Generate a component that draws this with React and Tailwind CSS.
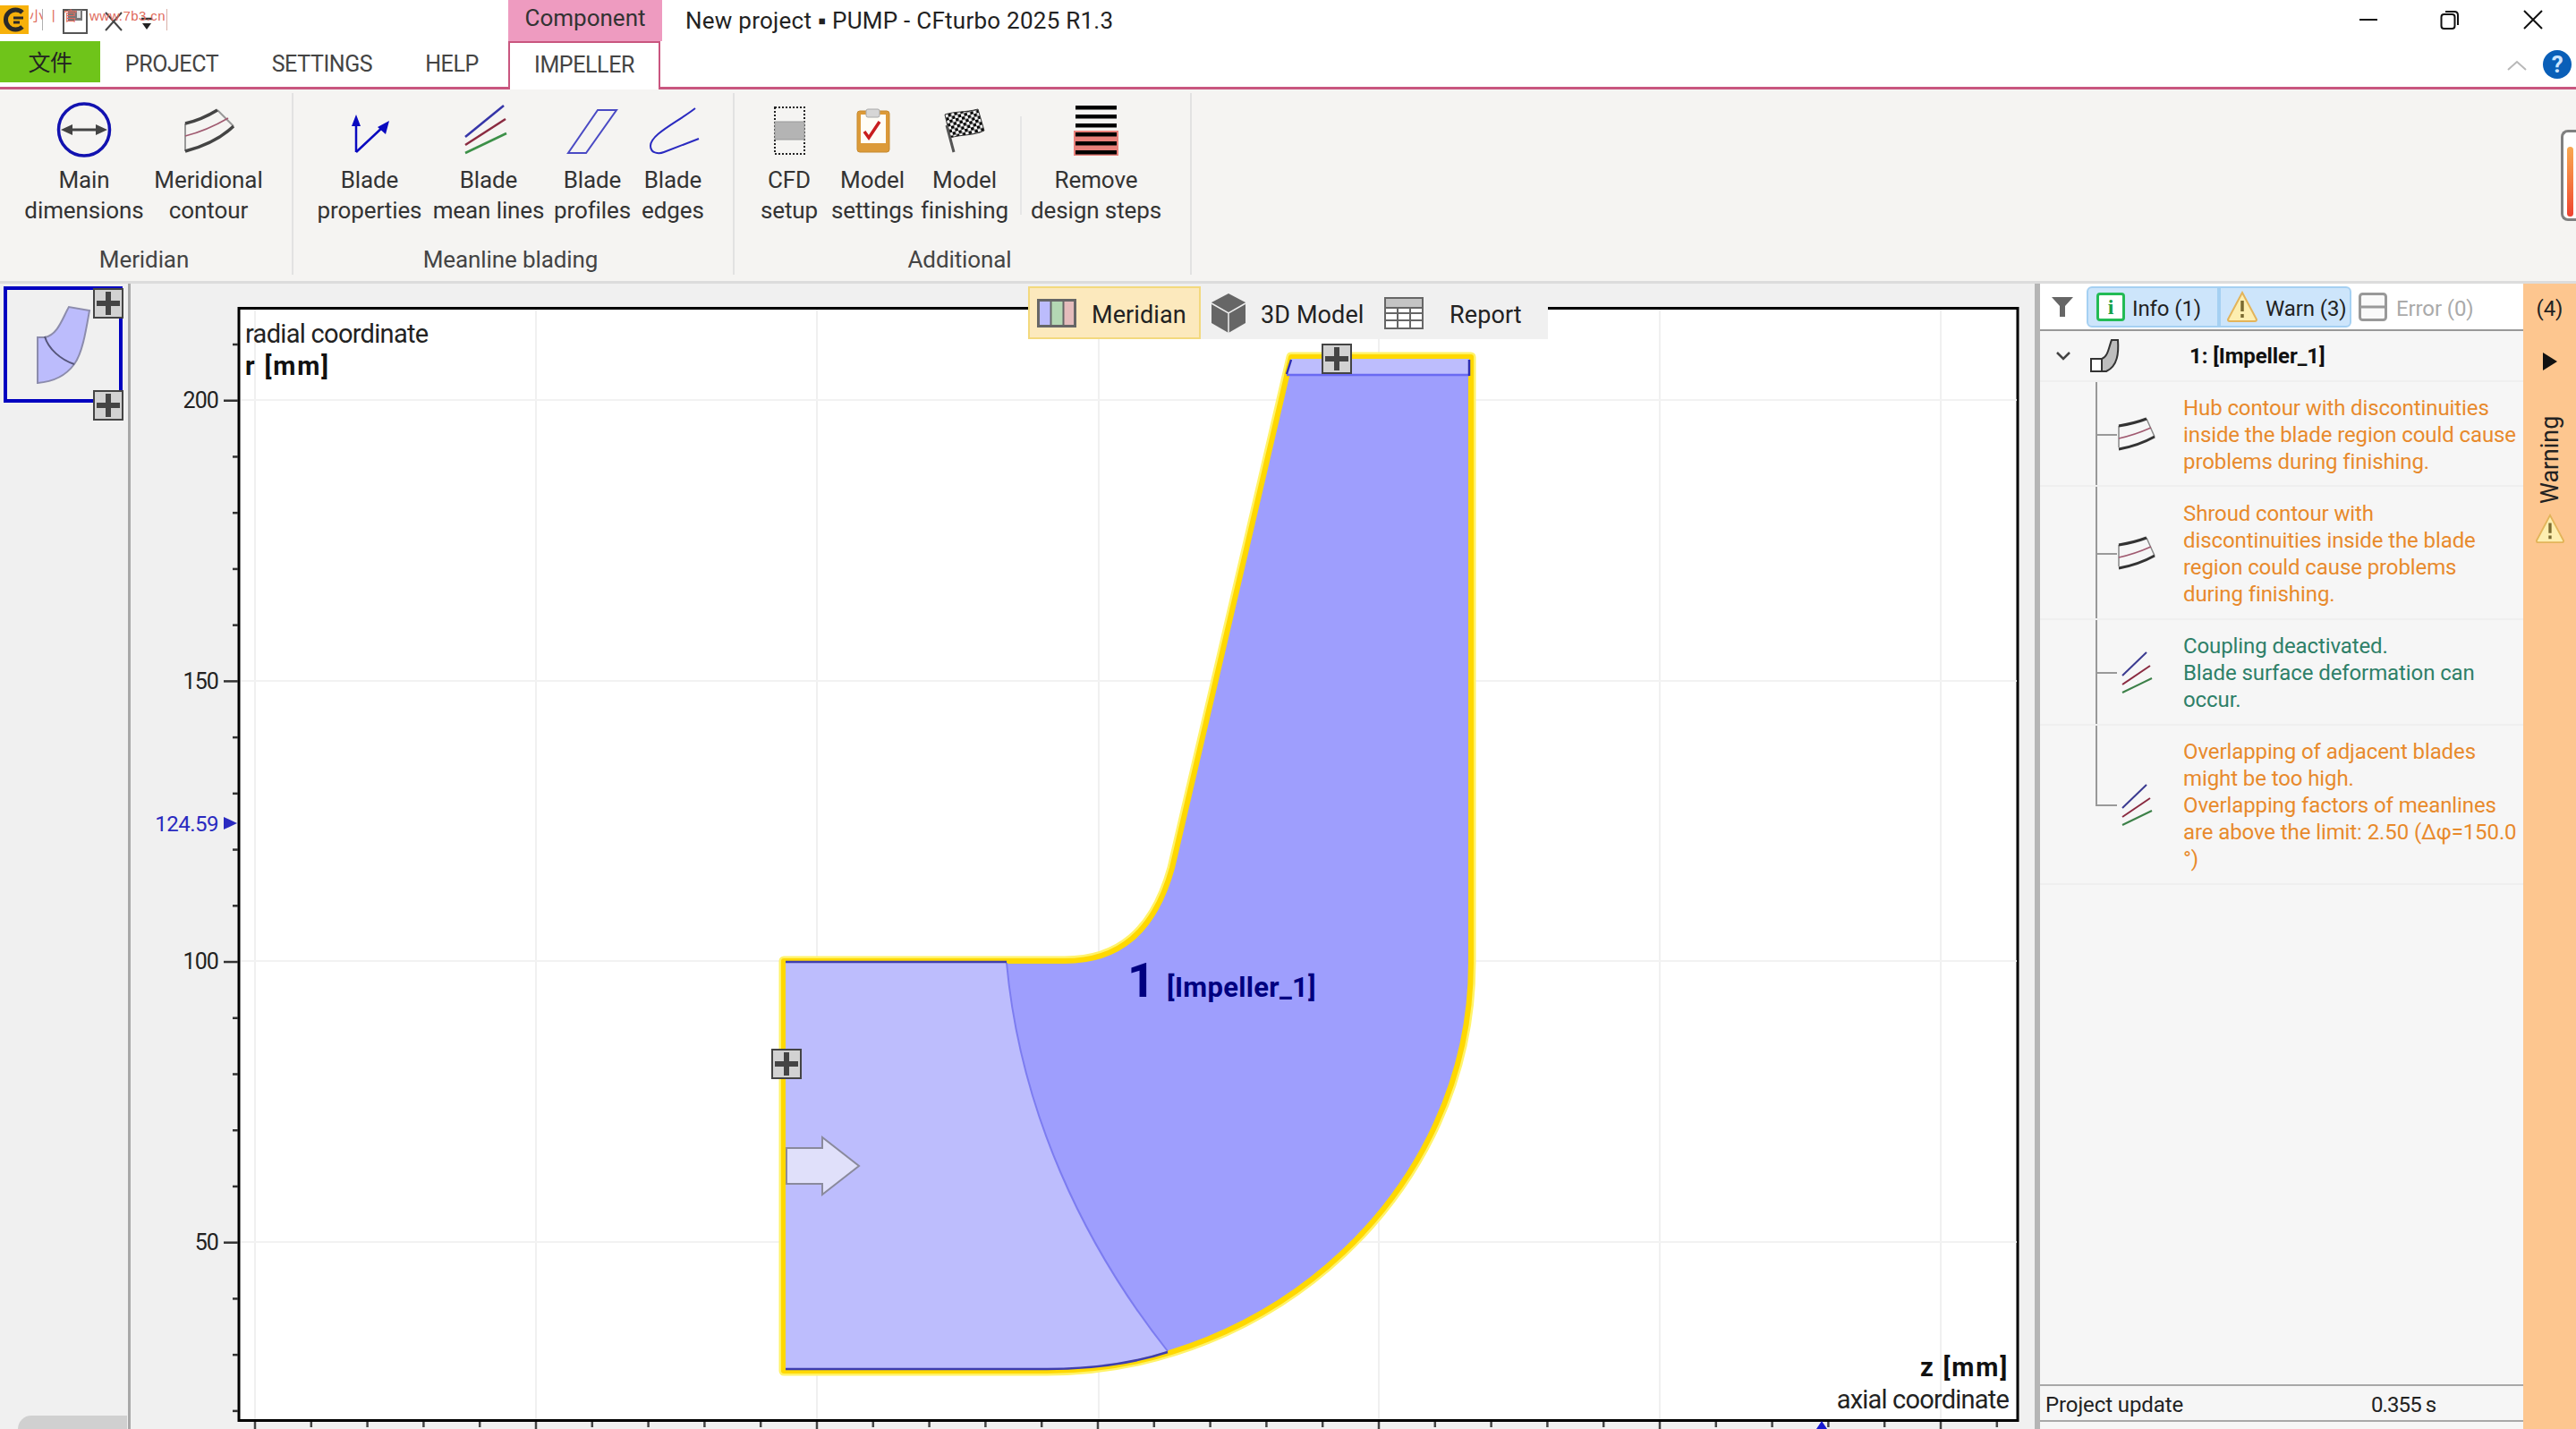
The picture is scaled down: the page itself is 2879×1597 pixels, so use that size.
import React from "react";

const Ic = ({ children }) => (
  <svg width="80" height="75" viewBox="-40 108 80 75" className="shrink-0">{children}</svg>
);

const MainIcon = () => (
  <Ic>
    <ellipse cx="0" cy="145" rx="28.5" ry="29" fill="none" stroke="#1212b0" strokeWidth="3.5" />
    <path d="M-18 145H18" stroke="#444" strokeWidth="3" />
    <path d="M-26 145L-13 139V151ZM26 145L13 139V151Z" fill="#444" />
  </Ic>
);
const MeridIcon = () => (
  <Ic>
    <path d="M-26 138L-26 169M10 123L28 141" stroke="#999" strokeWidth="2" fill="none" />
    <path d="M-26 138Q-8 134 10 123M28 141Q8 160 -26 169" stroke="#444" strokeWidth="3.5" fill="none" />
    <path d="M-26 152Q-2 146 22 132" stroke="#a05a70" strokeWidth="1.5" fill="none" />
  </Ic>
);
const PropsIcon = () => (
  <Ic>
    <path d="M-15 170V138M-15 170L17 140" stroke="#0a0ac0" strokeWidth="2.5" fill="none" />
    <path d="M-15 128L-20 141H-10ZM22 135L9 142L18 150Z" fill="#0a0ac0" />
  </Ic>
);
const MeanIcon = () => (
  <Ic>
    <path d="M-26 153L17 118" stroke="#3535a8" strokeWidth="2.5" />
    <path d="M-26 162L19 133" stroke="#8a2a40" strokeWidth="2.5" />
    <path d="M-26 171L20 149" stroke="#3c9048" strokeWidth="2.5" />
  </Ic>
);
const ProfIcon = () => (
  <Ic>
    <path d="M-27 171H-7L27 123H6Z" fill="none" stroke="#4a4ac4" strokeWidth="2" />
  </Ic>
);
const EdgeIcon = () => (
  <Ic>
    <path d="M25 121C6 136 -25 150 -25 163C-25 172 -15 172 -10 170L29 155" fill="none" stroke="#2a2ac0" strokeWidth="2" />
  </Ic>
);
const CfdIcon = () => (
  <Ic>
    <rect x="-16" y="120" width="33" height="52" fill="none" stroke="#222" strokeWidth="2" strokeDasharray="2 2" />
    <rect x="-16" y="136" width="33" height="20" fill="#b4b4b4" stroke="#999" strokeWidth="1" />
  </Ic>
);
const ClipIcon = () => (
  <Ic>
    <rect x="-17" y="124" width="36" height="46" rx="3" fill="#dc9a38" stroke="#c58a30" strokeWidth="1" />
    <rect x="-13" y="128" width="28" height="32" fill="#fffdf6" />
    <rect x="-7" y="122" width="15" height="9" rx="2" fill="#d6d6d6" stroke="#aaa" strokeWidth="1" />
    <path d="M-9 147L-4 154L8 136" fill="none" stroke="#c81e1e" strokeWidth="3.5" />
  </Ic>
);
const FlagIcon = () => (
  <Ic>
    <defs>
      <pattern id="chk" width="7" height="7" patternUnits="userSpaceOnUse" patternTransform="rotate(-14)">
        <rect width="7" height="7" fill="#fff" />
        <rect width="3.5" height="3.5" fill="#000" />
        <rect x="3.5" y="3.5" width="3.5" height="3.5" fill="#000" />
      </pattern>
    </defs>
    <path d="M-22 128C-10 124 0 126 15 122L22 146C10 152 -4 150 -16 154Z" fill="url(#chk)" stroke="#333" strokeWidth="1" />
    <path d="M-20 140L-12 170" stroke="#555" strokeWidth="3" />
  </Ic>
);
const RemoveIcon = () => (
  <Ic>
    <rect x="-25" y="146" width="50" height="28" fill="#e8807a" />
    {[118, 128, 138, 148, 158, 168].map((y) => (
      <rect key={y} x="-23" y={y} width="46" height="4.5" fill="#000" />
    ))}
  </Ic>
);

const RB = ({ icon, a, b, w }) => (
  <div className={`flex flex-col items-center pt-[4px] ${w}`}>
    {icon}
    <div className="text-center leading-[34px] pt-[1px] text-[#333] whitespace-nowrap">
      {a}
      <br />
      {b}
    </div>
  </div>
);

const Plus = ({ className }) => (
  <div className={`absolute w-[34px] h-[34px] bg-[#d2d2d2] border-2 border-[#444] flex items-center justify-center ${className}`}>
    <svg width="26" height="26" viewBox="0 0 26 26">
      <path d="M13 0V26M0 13H26" stroke="#444" strokeWidth="6" />
    </svg>
  </div>
);

const WarnTri = ({ s = 36 }) => (
  <svg width={s} height={s} viewBox="0 0 36 36" className="shrink-0">
    <path d="M18 2L34 32Q34 34 32 34H4Q2 34 2 32Z" fill="#fdeeb0" stroke="#e3b45a" strokeWidth="2" />
    <path d="M18 11V23M18 26V30" stroke="#7a6a30" strokeWidth="3.5" />
  </svg>
);

const MerRowIcon = () => (
  <svg width="46" height="42" viewBox="0 0 46 42">
    <path d="M2 12L2 36M33 4L42 24" stroke="#888" strokeWidth="1.5" fill="none" />
    <path d="M2 12Q20 9 33 4M42 24Q24 34 2 38" stroke="#333" strokeWidth="3" fill="none" />
    <path d="M2 26Q20 22 38 14" stroke="#a05a70" strokeWidth="1.5" fill="none" />
  </svg>
);
const MeanRowIcon = () => (
  <svg width="46" height="48" viewBox="0 0 46 48">
    <path d="M6 28L33 2" stroke="#3a3a90" strokeWidth="2" />
    <path d="M6 38L37 17" stroke="#8a2a40" strokeWidth="2" />
    <path d="M6 47L39 31" stroke="#3c8048" strokeWidth="2" />
  </svg>
);

const Msg = ({ icon, children, color, last, h }) => (
  <div className={`relative flex items-center pl-[86px] border-b-2 border-[#efefef] ${h}`}>
    <div className={`absolute left-[62px] top-0 w-[2px] bg-[#999] ${last ? "h-1/2" : "h-full"}`} />
    <div className="absolute left-[62px] top-1/2 w-[24px] h-[2px] bg-[#999]" />
    <div className="w-[46px] flex justify-center">{icon}</div>
    <div className={`ml-[28px] pt-[2px] text-[24px] leading-[30px] whitespace-nowrap tracking-[-0.1px] ${color}`}>{children}</div>
  </div>
);

const gridV = [285, 599, 913, 1228, 1541, 1855, 2169];
const gridH = [447, 761, 1074, 1388];
const yTicks = Array.from({ length: 20 }, (_, i) => 385 + i * 62.73);
const xTicks = Array.from({ length: 32 }, (_, i) => 285 + i * 62.8);

const outline =
  "M876 1074H1190C1250 1074 1290 1042 1310 970L1443 399H1644V1076C1644 1332 1420 1532 1170 1532H876Z";

const Chart = () => (
  <svg viewBox="146 317 2128 1280" className="w-full h-full block">
    <rect x="267" y="344.5" width="1988" height="1243" fill="#fff" stroke="#000" strokeWidth="3" />
    {gridV.map((x) => (
      <path key={x} d={`M${x} 346V1586`} stroke="#f0f0f0" strokeWidth="2" />
    ))}
    {gridH.map((y) => (
      <path key={y} d={`M269 ${y}H2254`} stroke="#f2f2f2" strokeWidth="2" />
    ))}
    {yTicks.map((y, i) => (
      <path key={i} d={`M${i % 5 === 1 ? 250 : 260} ${y}H266`} stroke="#333" strokeWidth="2.5" />
    ))}
    {xTicks.map((x, i) => (
      <path key={i} d={`M${x} 1589V${i % 5 === 0 ? 1597 : 1595}`} stroke="#444" strokeWidth="2.5" />
    ))}
    {[
      ["200", 447],
      ["150", 761],
      ["100", 1074],
      ["50", 1388],
    ].map(([t, y]) => (
      <text key={t} x="244" y={y + 9} textAnchor="end" className="text-[25px] fill-[#222] tracking-[-0.9px]">
        {t}
      </text>
    ))}
    <text x="244" y="929" textAnchor="end" className="text-[24px] fill-[#2a2ac0] tracking-[-0.5px]">
      124.59
    </text>
    <path d="M250 913L265 920L250 927Z" fill="#2a2ac0" />
    <path d="M2036 1588L2030 1597H2042Z" fill="#1a1ad0" />

    <text x="274" y="383" className="text-[29px] fill-[#222] tracking-[-0.7px]">radial coordinate</text>
    <text x="274" y="419" className="text-[29px] font-bold fill-[#111] tracking-[1.8px]">r [mm]</text>
    <text x="2245" y="1538" textAnchor="end" className="text-[29px] font-bold fill-[#111] tracking-[1.8px]">z [mm]</text>
    <text x="2245" y="1574" textAnchor="end" className="text-[29px] fill-[#222] tracking-[-0.8px]">axial coordinate</text>

    <path d={outline} fill="#9e9efd" stroke="#fff36a" strokeWidth="11" strokeLinejoin="round" />
    <path d={outline} fill="#9e9efd" stroke="#ffd800" strokeWidth="6" strokeLinejoin="round" />
    <path d="M878 1076H1125C1140 1240 1210 1390 1305 1510C1260 1524 1210 1530 1170 1530H878Z" fill="#bdbdfd" />
    <path d="M1125 1076C1140 1240 1210 1390 1305 1510" fill="none" stroke="#7c7cf0" strokeWidth="2" />
    <path d="M878 1075H1125M878 1530H1170C1220 1530 1265 1524 1305 1511" fill="none" stroke="#3e3eae" strokeWidth="2.5" />
    <path d="M1443 401L1438 419H1642V401Z" fill="#bdbdfd" />
    <path d="M1438 419H1642" stroke="#6a6af2" strokeWidth="2.5" />
    <path d="M1443 402L1438 418M1642 402V420" stroke="#3030b0" strokeWidth="2.5" />
    <path d="M879 1283H919V1271L960 1303L919 1335V1323H879Z" fill="#e0e0fa" stroke="#8a8a9c" strokeWidth="2" />
    <text x="1260" y="1114" className="text-[54px] font-bold fill-[#000080]">1</text>
    <text x="1304" y="1114" className="text-[31px] font-bold fill-[#000080] tracking-[0.3px]">[Impeller_1]</text>
  </svg>
);

export default function App() {
  return (
    <div className="w-[2879px] h-[1597px] overflow-hidden bg-white flex flex-col font-['Roboto',sans-serif] text-[26px] tracking-[-0.1px]">
      {/* title bar */}
      <div className="relative h-[46px] flex shrink-0">
        <div className="w-[568px] flex items-start">
          <svg width="32" height="32" viewBox="0 0 32 32" className="mt-[6px]">
            <rect width="32" height="32" fill="#f7b10a" />
            <path d="M25 8A11 11 0 1 0 25 24" fill="none" stroke="#2a2a2a" strokeWidth="5" />
            <path d="M15 14H26M15 19H22" stroke="#2a2a2a" strokeWidth="3" />
          </svg>
          <div className="ml-[15px] mt-[10px] w-[1px] h-[24px] bg-[#b0b0b0]" />
          <svg width="30" height="28" viewBox="0 0 30 28" className="ml-[22px] mt-[10px]">
            <rect x="1" y="1" width="26" height="26" fill="#fff" stroke="#555" strokeWidth="2" />
            <rect x="6" y="1" width="16" height="12" fill="#777" />
            <rect x="16" y="2" width="4" height="8" fill="#ddd" />
          </svg>
          <svg width="22" height="22" viewBox="0 0 22 22" className="ml-[16px] mt-[13px]">
            <path d="M2 1L20 21M20 1L2 21" stroke="#444" strokeWidth="2" />
          </svg>
          <svg width="14" height="16" viewBox="0 0 14 16" className="ml-[19px] mt-[19px]">
            <path d="M1 2H13" stroke="#333" strokeWidth="2.5" />
            <path d="M2 7H12L7 14Z" fill="#222" />
          </svg>
          <div className="ml-[15px] mt-[10px] w-[1px] h-[24px] bg-[#d8b0a8]" />
        </div>
        <div className="absolute left-[33px] top-[7px] flex text-[15px] leading-[22px] text-[#e06a5a] tracking-normal font-['Liberation_Sans','Noto_Sans_CJK_SC',sans-serif] whitespace-nowrap">
          <span className="w-[67px]">小 丨 官</span>
          <span className="tracking-[0.4px]">www.7b3.cn</span>
        </div>
        <div className="w-[172px] h-[46px] bg-[#ee9bc0] flex items-center justify-center text-[#333] text-[26px] pb-[6px] tracking-normal">
          Component
        </div>
        <div className="ml-[26px] leading-[46px] text-[#222] tracking-[0.25px] whitespace-nowrap">New project ▪ PUMP - CFturbo 2025 R1.3</div>
        <div className="ml-auto flex items-start">
          <svg width="24" height="24" viewBox="0 0 24 24" className="mt-[10px]">
            <path d="M2 12H22" stroke="#111" strokeWidth="2" />
          </svg>
          <svg width="24" height="24" viewBox="0 0 24 24" className="ml-[67px] mt-[10px]">
            <rect x="2.5" y="6" width="15" height="16" rx="3" fill="none" stroke="#111" strokeWidth="2" />
            <path d="M7 3H17Q21 3 21 7V18" fill="none" stroke="#111" strokeWidth="2" />
          </svg>
          <svg width="24" height="24" viewBox="0 0 24 24" className="ml-[69px] mr-[36px] mt-[10px]">
            <path d="M2 2L22 22M22 2L2 22" stroke="#111" strokeWidth="2" />
          </svg>
        </div>
      </div>

      {/* tabs row */}
      <div className="relative h-[54px] shrink-0 flex items-start border-b-[3px] border-[#c9567f] text-[25px] text-[#444] tracking-[-0.4px]">
        <div className="w-[112px] h-[46px] bg-[#6fc41a] flex items-center justify-center text-[#222] font-['Noto_Sans_CJK_SC',sans-serif]">文件</div>
        <div className="w-[160px] h-[51px] flex items-center justify-center">PROJECT</div>
        <div className="w-[176px] h-[51px] flex items-center justify-center">SETTINGS</div>
        <div className="w-[114px] h-[51px] flex items-center justify-center">HELP</div>
        <div className="ml-[6px] w-[170px] h-[54px] bg-white border-x-2 border-t-2 border-[#c9567f] flex items-center justify-center pb-[3px]">IMPELLER</div>
        <svg width="24" height="14" viewBox="0 0 24 14" className="absolute left-[2801px] top-[20px]">
          <path d="M2 12L12 3L22 12" fill="none" stroke="#b8b8b8" strokeWidth="2" />
        </svg>
        <div className="absolute left-[2842px] top-[10px] w-[32px] h-[32px] rounded-full bg-[#0a5fb8] text-[#cfe6ff] font-bold text-[26px] flex items-center justify-center">?</div>
      </div>

      {/* ribbon */}
      <div className="relative h-[217px] shrink-0 bg-[#f5f4f2] border-b-[3px] border-[#dcdcdc] flex pt-[4px] pb-[7px]">
        <div className="w-[328px] flex flex-col border-r-2 border-[#e2e2e2]">
          <div className="flex pl-[16px]">
            <RB icon={<MainIcon />} a="Main" b="dimensions" w="w-[156px]" />
            <RB icon={<MeridIcon />} a="Meridional" b="contour" w="w-[122px]" />
          </div>
          <div className="mt-auto text-center leading-[34px] pt-[3px] text-[#444] pr-[4px]">Meridian</div>
        </div>
        <div className="w-[493px] flex flex-col border-r-2 border-[#e2e2e2]">
          <div className="flex pl-[21px]">
            <RB icon={<PropsIcon />} a="Blade" b="properties" w="w-[128px]" />
            <RB icon={<MeanIcon />} a="Blade" b="mean lines" w="w-[138px]" />
            <RB icon={<ProfIcon />} a="Blade" b="profiles" w="w-[94px]" />
            <RB icon={<EdgeIcon />} a="Blade" b="edges" w="w-[86px]" />
          </div>
          <div className="mt-auto text-center leading-[34px] pt-[3px] text-[#444] pr-[6px]">Meanline blading</div>
        </div>
        <div className="w-[511px] flex flex-col border-r-2 border-[#e2e2e2]">
          <div className="flex pl-[19px]">
            <RB icon={<CfdIcon />} a="CFD" b="setup" w="w-[84px]" />
            <RB icon={<ClipIcon />} a="Model" b="settings" w="w-[102px]" />
            <RB icon={<FlagIcon />} a="Model" b="finishing" w="w-[104px]" />
            <div className="w-[2px] h-[110px] mt-[26px] ml-[10px] mr-[8px] bg-[#e6e6e6]" />
            <RB icon={<RemoveIcon />} a="Remove" b="design steps" w="w-[150px]" />
          </div>
          <div className="mt-auto text-center leading-[34px] pt-[3px] text-[#444] pr-[6px]">Additional</div>
        </div>
        <div className="absolute left-[2862px] top-[45px] w-[17px] h-[102px] border-[3px] border-r-0 border-[#808080] rounded-l-[8px] bg-white flex justify-center pt-[16px] pb-[2px]">
          <div className="w-[7px] rounded-full bg-linear-to-b from-[#f8a850] to-[#ee4030]" />
        </div>
      </div>

      {/* main */}
      <div className="flex-1 min-h-0 flex">
        <div className="relative w-[146px] bg-[#f0f0f0] border-r-[3px] border-[#a8a8a8] shrink-0">
          <div className="absolute left-[4px] top-[3px] w-[133px] h-[130px] border-4 border-[#0000c0]">
            <svg width="125" height="122" viewBox="8 324 125 122">
              <path d="M42 377H50C65 374 70 355 77 343L100 347C96 370 92 395 83 407C72 422 55 427 42 428Z" fill="#bcbcfc" stroke="#8c8cac" strokeWidth="2" />
              <path d="M50 376C54 390 68 402 83 407" fill="none" stroke="#55557a" strokeWidth="2" />
            </svg>
          </div>
          <Plus className="left-[104px] top-[5px]" />
          <Plus className="left-[104px] top-[119px]" />
          <div className="absolute left-[20px] bottom-0 w-[122px] h-[15px] bg-[#d0d0d0] rounded-tl-[30px]" />
        </div>

        <div className="relative flex-1 min-w-0 bg-[#f0f0f0]">
          <Chart />
          <div className="absolute left-[1003px] top-[3px] w-[581px] h-[59px] bg-[#f0f0f0] flex items-center text-[#222] text-[27px] tracking-[0.1px]">
            <div className="w-[193px] h-[59px] shrink-0 bg-[#fce9bd] border-2 border-[#f3d97e] flex items-center pl-[8px]">
              <svg width="44" height="32" viewBox="0 0 44 32">
                <rect x="1.5" y="1.5" width="14" height="29" fill="#bcbcfc" />
                <rect x="15.5" y="1.5" width="14" height="29" fill="#b4d8b4" />
                <rect x="29.5" y="1.5" width="13" height="29" fill="#e4bcbc" />
                <rect x="1.5" y="1.5" width="41" height="29" fill="none" stroke="#666" strokeWidth="3" />
                <path d="M15.5 2V30M29.5 2V30" stroke="#666" strokeWidth="2" />
              </svg>
              <span className="ml-[17px] pt-[5px]">Meridian</span>
            </div>
            <svg width="40" height="44" viewBox="0 0 40 44" className="ml-[11px] shrink-0">
              <path d="M20 0L39 10V33L20 44L1 33V10Z" fill="#666" />
              <path d="M1 11L20 22L39 11M20 22V44" fill="none" stroke="#f0f0f0" strokeWidth="1.5" />
            </svg>
            <span className="ml-[16px] pt-[5px] whitespace-nowrap w-[116px]">3D Model</span>
            <svg width="44" height="36" viewBox="0 0 44 36" className="ml-[22px] shrink-0">
              <rect x="1" y="1" width="42" height="34" fill="#fff" stroke="#666" strokeWidth="2" />
              <rect x="1" y="1" width="42" height="11" fill="#c4c4c4" stroke="#666" strokeWidth="2" />
              <path d="M1 18H43M1 26H43M15 12V35M29 12V35" stroke="#666" strokeWidth="2" />
            </svg>
            <span className="ml-[29px] pt-[5px]">Report</span>
          </div>
          <Plus className="left-[1331px] top-[67px]" />
          <Plus className="left-[716px] top-[855px]" />
        </div>

        <div className="w-[6px] bg-[#b5b5b5] shrink-0" />

        <div className="w-[540px] shrink-0 bg-[#f6f6f6] flex flex-col text-[24px] tracking-[-0.1px]">
          <div className="h-[53px] shrink-0 bg-white border-b-2 border-[#999] flex items-center pt-[3px] pb-[2px]">
            <svg width="24" height="22" viewBox="0 0 24 22" className="ml-[13px]">
              <path d="M0 0H24L15 10V22H9V10Z" fill="#666" />
            </svg>
            <div className="ml-[15px] w-[148px] h-[46px] bg-[#cde5fb] border-2 border-[#a5d0f2] rounded-l-[6px] flex items-center pl-[9px] text-[#222]">
              <div className="w-[32px] h-[32px] bg-white border-[3px] border-[#22bb55] rounded-[4px] flex items-center justify-center text-[#18a048] font-bold font-['Liberation_Serif',serif] text-[24px] leading-none">i</div>
              <span className="ml-[8px] pt-[3px] whitespace-nowrap">Info (1)</span>
            </div>
            <div className="w-[148px] h-[46px] bg-[#cde5fb] border-2 border-[#a5d0f2] rounded-r-[6px] flex items-center pl-[6px] text-[#222]">
              <WarnTri />
              <span className="ml-[8px] pt-[3px] whitespace-nowrap">Warn (3)</span>
            </div>
            <svg width="32" height="32" viewBox="0 0 32 32" className="ml-[8px]">
              <rect x="1.5" y="1.5" width="29" height="29" rx="3" fill="#fafafa" stroke="#999" strokeWidth="3" />
              <path d="M2 16H30" stroke="#999" strokeWidth="3" />
            </svg>
            <span className="ml-[10px] pt-[3px] text-[#aaa] whitespace-nowrap">Error (0)</span>
          </div>
          <div className="h-[57px] shrink-0 relative flex items-center border-b-2 border-[#efefef]">
            <svg width="18" height="12" viewBox="0 0 18 12" className="ml-[17px]">
              <path d="M2 2L9 9L16 2" fill="none" stroke="#444" strokeWidth="2.5" />
            </svg>
            <svg width="34" height="38" viewBox="0 0 34 38" className="ml-[21px]">
              <path d="M1 22H13L13 36H1Z" fill="#fff" stroke="#333" strokeWidth="2" />
              <path d="M13 22C20 20 21 8 24 1L31 1C32 15 31 30 18 36L13 36Z" fill="#bdbdbd" stroke="#333" strokeWidth="2" />
            </svg>
            <span className="ml-[77px] font-bold text-[#111] whitespace-nowrap">1: [Impeller_1]</span>
          </div>
          <Msg h="h-[117px]" icon={<MerRowIcon />} color="text-[#e88a2c]">
            Hub contour with discontinuities
            <br />
            inside the blade region could cause
            <br />
            problems during finishing.
          </Msg>
          <Msg h="h-[149px]" icon={<MerRowIcon />} color="text-[#e88a2c]">
            Shroud contour with
            <br />
            discontinuities inside the blade
            <br />
            region could cause problems
            <br />
            during finishing.
          </Msg>
          <Msg h="h-[118px]" icon={<MeanRowIcon />} color="text-[#2e8068]">
            Coupling deactivated.
            <br />
            Blade surface deformation can
            <br />
            occur.
          </Msg>
          <Msg h="h-[178px]" last icon={<MeanRowIcon />} color="text-[#e88a2c]">
            Overlapping of adjacent blades
            <br />
            might be too high.
            <br />
            Overlapping factors of meanlines
            <br />
            are above the limit: 2.50 (Δφ=150.0
            <br />
            °)
          </Msg>
          <div className="flex-1" />
          <div className="h-[42px] shrink-0 border-y-2 border-[#a8a8a8] flex items-center text-[#222] pt-[3px]">
            <span className="ml-[6px] w-[364px] whitespace-nowrap">Project update</span>
            <span className="whitespace-nowrap tracking-[-0.9px]">0.355 s</span>
          </div>
          <div className="h-[8px] shrink-0" />
        </div>

        <div className="w-[59px] shrink-0 bg-[#fdc68f] flex flex-col items-center pt-[10px] text-[#222] text-[24px]">
          <div className="leading-[36px]">(4)</div>
          <svg width="18" height="22" viewBox="0 0 18 22" className="mt-[30px]">
            <path d="M1 1L17 11L1 21Z" fill="#111" />
          </svg>
          <div className="mt-[49px] [writing-mode:vertical-rl] rotate-180 leading-[30px] h-[100px] text-center text-[27px]">Warning</div>
          <div className="mt-[10px]">
            <WarnTri s={34} />
          </div>
        </div>
      </div>
    </div>
  );
}
